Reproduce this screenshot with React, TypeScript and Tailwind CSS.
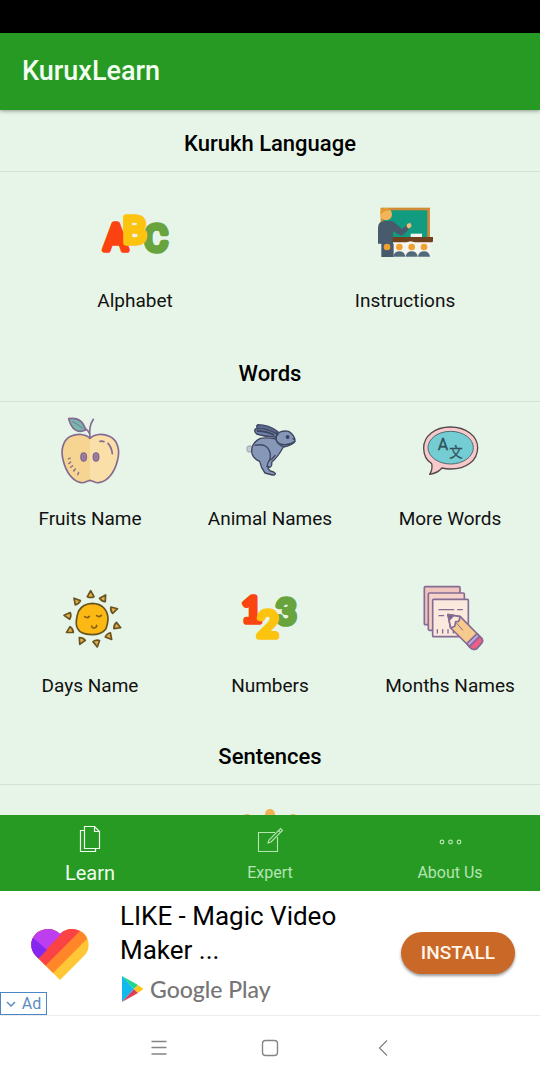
import type { ReactNode } from "react";
import { clsx } from "clsx";

function Icon({ viewBox, children }: { viewBox: string; children: ReactNode }) {
  return (
    <svg viewBox={viewBox} className="size-17 overflow-visible" aria-hidden="true">
      {children}
    </svg>
  );
}

function AbcIcon() {
  return (
    <Icon viewBox="63 27 204 204">
      <g fontFamily="Roboto, sans-serif" fontSize="112" textAnchor="middle" strokeWidth="17" strokeLinejoin="round">
        <text x="107" y="181" fontSize="108" fill="#fb4210" stroke="#fb4210">A</text>
        <text x="228" y="184" fontSize="108" fill="#69a33e" stroke="#69a33e">C</text>
        <text x="164" y="159" fill="#fcc30f" stroke="#fcc30f">B</text>
      </g>
    </Icon>
  );
}

function TeacherIcon() {
  return (
    <Icon viewBox="33 27 204 204">
      <rect x="62" y="53" width="148" height="92" fill="#cf8b35" />
      <rect x="70" y="61" width="132" height="84" fill="#119b80" />
      <rect x="152" y="131" width="34" height="10" fill="#f3f5ee" />
      <rect x="98" y="156" width="114" height="44" fill="#f5f5f0" />
      <path d="M54 156V114q0-21 20-21h17q9 0 15 7l20 17 17-14 8 10-19 20q-6 6-13 2l-20-11v37h2v40H64v-40H54z" fill="#475b6c" />
      <circle cx="78" cy="73" r="18" fill="#f4b459" />
      <path d="M62 73V56h31l-9 7q-8-2-13 3z" fill="#e39a2c" />
      <path d="M141 102l10-4 4 10-8 8-7-5z" fill="#f2bd76" />
      <path d="M98 141h121v12q0 4-4 4h-50l-13-3-13 3H98z" fill="#71401d" />
      <circle cx="81" cy="171" r="10" fill="#f0a02e" />
      {[118, 155, 192].map((x) => (
        <g key={x}>
          <circle cx={x} cy="171" r="10" fill="#f0a02e" />
          <path d={`M${x - 18} 200q2-16 18-16t18 16z`} fill="#52697a" />
        </g>
      ))}
    </Icon>
  );
}

function AppleIcon() {
  return (
    <Icon viewBox="48 33 204 204">
      <path d="M150 97C137 83 111 82 92 91C68 103 61 133 70 165C78 197 97 226 123 230C134 232 141 224 150 223z" fill="#f6d491" />
      <path d="M150 97C163 83 189 82 208 91C234 103 241 133 232 165C224 197 205 226 177 230C166 232 159 224 150 223z" fill="#fbdfa9" />
      <g fill="none" stroke="#846a91" strokeWidth="5" strokeLinecap="round" strokeLinejoin="round">
        <path d="M150 97C137 83 111 82 92 91C68 103 61 133 70 165C78 197 97 226 123 230C134 232 141 224 150 223C159 224 166 232 177 230C205 226 224 197 232 165C241 133 234 103 208 91C189 82 163 83 150 97z" />
        <path d="M150 95C147 74 150 55 160 40M149 84q-4-12-20-20" />
        <path d="M86 38q40-7 51 34Q100 88 86 38z" fill="#75b8ac" />
        <path d="M98 47q18 8 29 20" strokeWidth="3" />
        <path d="M180 106q7-2 12 1M204 112q11 12 13 31" />
        <ellipse cx="131" cy="153" rx="8" ry="12" fill="#a987a6" />
        <ellipse cx="168" cy="153" rx="8" ry="12" fill="#a987a6" />
        <path d="M131 149v8M168 149v8" strokeWidth="4" />
        <path d="M85 159l6-3M86 173l6-5M92 184l6-5M101 195l5-6M113 206l3-7" strokeWidth="4" />
      </g>
    </Icon>
  );
}

function RabbitIcon() {
  return (
    <Icon viewBox="18 33 204 204">
      <g stroke="#3e4762" strokeWidth="4" strokeLinejoin="round" strokeLinecap="round">
        <ellipse cx="59" cy="129" rx="8" ry="9" fill="#c6ccd2" stroke="#a9b0bd" />
        <path d="M144 77Q116 56 83 56Q75 64 87 70L137 85z" fill="#59698f" />
        <path d="M139 99Q110 94 91 97Q65 109 65 135Q66 157 89 166Q93 186 105 201L127 207Q137 207 136 202Q132 197 121 195Q112 187 112 181L120 184Q127 181 125 169Q145 151 160 123Q187 118 195 106Q196 89 176 76Q153 72 139 86z" fill="#8697b7" />
        <path d="M144 85Q104 63 76 69Q71 76 80 84Q110 94 137 93z" fill="#7182aa" />
        <path d="M83 75Q110 75 130 86" fill="none" strokeWidth="6" />
        <path d="M75 118Q102 112 114 127Q125 143 119 162Q112 169 111 181M138 101Q143 117 160 122M117 164q11-4 18-16" fill="none" />
        <path d="M140 86Q133 103 148 113Q170 122 194 107" fill="none" />
        <circle cx="173" cy="93" r="4" fill="#30384d" />
        <path d="M189 98l5 3" fill="none" />
      </g>
    </Icon>
  );
}

function TranslateIcon() {
  return (
    <Icon viewBox="18 18 204 204">
      <path d="M121 48C168 48 203 75 203 110C203 149 168 174 122 174C111 174 103 173 96 171Q82 187 59 190Q69 174 65 158C49 148 41 130 41 111C41 75 75 48 121 48z" fill="#f8c9cb" stroke="#52474b" strokeWidth="4" strokeLinejoin="round" />
      <ellipse cx="122" cy="110" rx="68" ry="49" fill="#73cdd3" stroke="#506b73" strokeWidth="3" />
      <g fill="#31535d" stroke="#31535d" textAnchor="middle" fontFamily="Roboto, 'Noto Sans CJK SC', sans-serif">
        <text x="99" y="118" fontSize="48" strokeWidth="1">A</text>
        <text x="138" y="137" fontSize="40" strokeWidth="1">文</text>
      </g>
    </Icon>
  );
}

const rays = [
  [122, 55, 0],
  [161, 66, 32],
  [192, 101, 75],
  [202, 151, 112],
  [178, 182, 140],
  [140, 202, 170],
  [94, 195, 205],
  [59, 164, 240],
  [53, 119, 275],
  [79, 75, 320],
];

function SunIcon() {
  return (
    <Icon viewBox="18 24 204 204">
      <g stroke="#665321" strokeWidth="5" strokeLinecap="round" strokeLinejoin="round">
        {rays.map(([x, y, angle]) => (
          <path
            key={angle}
            d="M0-11L10 7Q0 12-10 7z"
            transform={`translate(${x} ${y}) rotate(${angle})`}
            fill="#e4ae45"
          />
        ))}
        <path d="M127 82C157 83 174 102 174 130Q173 145 168 158Q155 176 125 176Q91 175 83 158C75 145 80 119 86 105Q98 83 127 82z" fill="#fdb913" />
        <path d="M104 122q8 6 14-1M140 119q7 6 14-1M125 150q1 7 8 6 7-1 7-8" fill="none" stroke="#8b5f10" />
      </g>
    </Icon>
  );
}

function NumbersIcon() {
  return (
    <Icon viewBox="18 9 204 204">
      <g fontFamily="Lato, sans-serif" fontSize="106" textAnchor="middle" strokeWidth="17" strokeLinejoin="round">
        <text x="66" y="124" fill="#fb4510" stroke="#fb4510">1</text>
        <text x="168" y="130" fill="#69a33e" stroke="#69a33e">3</text>
        <text x="114" y="168" fontSize="110" fill="#fcc30f" stroke="#fcc30f">2</text>
      </g>
    </Icon>
  );
}

function NotesIcon() {
  return (
    <Icon viewBox="18 24 204 204">
      <g stroke="#866c94" strokeWidth="5" strokeLinejoin="round" strokeLinecap="round">
        <rect x="43" y="32" width="107" height="114" rx="3" fill="#efc4bd" />
        <rect x="55" y="51" width="108" height="112" rx="3" fill="#f5d3c8" />
        <rect x="68" y="70" width="107" height="112" rx="3" fill="#fce9dd" />
        <path d="M87 101h44M143 101h14M87 119h14M82 161v10M98 161v10M114 161v10M130 161v10" fill="none" strokeWidth="4" />
        <path d="M114 116L151 122L214 186Q220 193 215 201L202 216Q192 224 183 216L122 156z" fill="#f6ca8d" />
        <path d="M114 116L151 122L146 136L137 137L134 151L122 156z" fill="#fbeadb" />
        <path d="M114 116l16 3-11 12z" fill="#715783" />
        <path d="M140 142l18 20" strokeWidth="3" />
        <path d="M170 203L201 173L209 181L178 212z" fill="#bfa6e3" />
        <path d="M178 212L209 181L216 188Q220 195 215 201L202 216Q192 224 183 217z" fill="#ed5d86" />
      </g>
    </Icon>
  );
}

function PeopleIcon() {
  return (
    <Icon viewBox="0 0 68 68">
      <g fill="#efb354">
        <circle cx="34" cy="14" r="5" />
        <circle cx="11" cy="18" r="4" />
        <circle cx="57" cy="18" r="4" />
        <path d="M24 44V30q0-8 10-8t10 8v14zM3 44V31q0-6 8-6t8 6v13zM49 44V31q0-6 8-6t8 6v13z" />
      </g>
    </Icon>
  );
}

type Item = { label: string; icon: ReactNode };

const language: Item[] = [
  { label: "Alphabet", icon: <AbcIcon /> },
  { label: "Instructions", icon: <TeacherIcon /> },
];

const words: Item[] = [
  { label: "Fruits Name", icon: <AppleIcon /> },
  { label: "Animal Names", icon: <RabbitIcon /> },
  { label: "More Words", icon: <TranslateIcon /> },
  { label: "Days Name", icon: <SunIcon /> },
  { label: "Numbers", icon: <NumbersIcon /> },
  { label: "Months Names", icon: <NotesIcon /> },
];

function Heading({ children }: { children: ReactNode }) {
  return (
    <h2 className="border-b border-[#d3e1d4] pt-[18px] pb-[11px] text-center text-[22px] leading-8 font-medium text-black">
      {children}
    </h2>
  );
}

function Tile({ label, icon }: Item) {
  return (
    <button type="button" className="flex flex-col items-center gap-[22px] text-[19px] leading-6 whitespace-nowrap text-[#111]">
      {icon}
      {label}
    </button>
  );
}

function LearnIcon() {
  return (
    <svg viewBox="0 0 28 28" className="size-7" fill="none" stroke="currentColor" aria-hidden="true">
      <path d="M8.500 1.500h10l5 5v17h-15zM18.500 1.500v5h5M8.500 5.500h-4v21h15v-3" strokeWidth="1.200" />
    </svg>
  );
}

function ExpertIcon() {
  return (
    <svg viewBox="0 0 28 28" className="size-7" fill="none" stroke="currentColor" aria-hidden="true">
      <path d="M19 7.500H2.500v19h19V12M12 18l1-3L24.500 3.500l2 2L15 17zM22.500 5.500l2 2" strokeWidth="1.100" />
    </svg>
  );
}

function DotsIcon() {
  return (
    <svg viewBox="0 0 28 28" className="size-7" fill="none" stroke="currentColor" strokeWidth="1.200" aria-hidden="true">
      <circle cx="6" cy="17" r="1.800" />
      <circle cx="14.500" cy="17" r="1.800" />
      <circle cx="23" cy="17" r="1.800" />
    </svg>
  );
}

const tabs = [
  { label: "Learn", icon: <LearnIcon />, active: true },
  { label: "Expert", icon: <ExpertIcon />, active: false },
  { label: "About Us", icon: <DotsIcon />, active: false },
];

function AdBanner() {
  return (
    <aside className="relative flex h-[125px] shrink-0 items-start border-b border-[#ececec] bg-white pr-[25px] pl-[30px]">
      <svg viewBox="0 0 60 54" className="mt-[37px] h-[54px] w-[60px] shrink-0" aria-hidden="true">
        <defs>
          <clipPath id="heart">
            <path d="M30 52L6 28C-2 20 1 7 10 3Q21-2 30 6Q39-2 50 3C59 7 62 20 54 28z" />
          </clipPath>
        </defs>
        <g clipPath="url(#heart)">
          <path d="M0 0h60v54H0z" fill="#ffc736" />
          <path d="M0 0h60v8L18 50H0z" fill="#ff8629" />
          <path d="M0 0h53L10 43H0z" fill="#fb4245" />
          <path d="M0 0h37L8 30H0z" fill="#bd3df0" />
          <path d="M0 7l17 15L8 31H0z" fill="#8528ef" />
        </g>
      </svg>
      <div className="ml-[30px] min-w-0 flex-1 pt-2">
        <p className="max-w-[240px] text-[26px] leading-[34px] text-black">LIKE - Magic Video Maker ...</p>
        <p className="mt-1.5 flex items-center gap-1.5 font-['Lato',sans-serif] text-[23px] leading-8 font-medium text-[#757575]">
          <svg viewBox="0 0 24 28" className="h-7 w-6" aria-hidden="true">
            <path d="M2 1L14 14 2 27z" fill="#11b9ee" />
            <path d="M2 1L18 10 14 14z" fill="#20d58b" />
            <path d="M2 27L18 18 14 14z" fill="#df3d57" />
            <path d="M18 10l5.500 4L18 18l-4-4z" fill="#fdc51a" />
          </svg>
          Google Play
        </p>
      </div>
      <button
        type="button"
        className="mt-[41px] h-[42px] rounded-full bg-[#ca6828] px-5 text-[19px] font-medium text-[#fff4e8] shadow-[0_2px_3px_rgba(0,0,0,0.4)]"
      >
        INSTALL
      </button>
      <a
        href="#ad"
        className="absolute bottom-0 left-0 flex h-[23px] w-[47px] items-center justify-center gap-1.5 border border-[#4d86c6] bg-white text-[16px] text-[#5b8dc0]"
      >
        <svg viewBox="0 0 10 6" className="h-1.5 w-2.5" fill="none" stroke="currentColor" strokeWidth="1.500" aria-hidden="true">
          <path d="M1 1l4 4 4-4" />
        </svg>
        Ad
      </a>
    </aside>
  );
}

function SystemBar() {
  return (
    <div className="flex h-16 shrink-0 items-center justify-center gap-[89px] bg-white text-[#858585]">
      <button type="button" aria-label="Recent apps">
        <svg viewBox="0 0 22 22" className="size-[22px]" stroke="currentColor" strokeWidth="1.300">
          <path d="M3.500 4.500h15M3.500 10.500h15M3.500 17h15" />
        </svg>
      </button>
      <button type="button" aria-label="Home">
        <svg viewBox="0 0 22 22" className="size-[22px]" fill="none" stroke="currentColor" strokeWidth="1.400">
          <rect x="3.500" y="3.500" width="15" height="15" rx="3" />
        </svg>
      </button>
      <button type="button" aria-label="Back">
        <svg viewBox="0 0 22 22" className="size-[22px]" fill="none" stroke="currentColor" strokeWidth="1.300">
          <path d="M17 3.500L9.500 11l7.500 7.500" />
        </svg>
      </button>
    </div>
  );
}

export default function App() {
  return (
    <div className="flex h-screen flex-col bg-[#e7f5e8] font-['Roboto',sans-serif]">
      <div className="h-[33px] shrink-0 bg-black" />
      <header className="z-10 flex h-[77px] shrink-0 items-center bg-[#279a24] px-[22px] shadow-[0_1px_4px_rgba(0,0,0,0.4)]">
        <h1 className="text-[27px] font-medium text-[#f4fff2]">KuruxLearn</h1>
      </header>

      <main className="min-h-0 flex-1 overflow-y-auto [scrollbar-width:none]">
        <section>
          <Heading>Kurukh Language</Heading>
          <div className="grid grid-cols-2 py-[27px]">
            {language.map((item) => (
              <Tile key={item.label} {...item} />
            ))}
          </div>
        </section>
        <section>
          <Heading>Words</Heading>
          <div className="grid grid-cols-3 gap-y-[53px] pt-[15px] pb-[25px]">
            {words.map((item) => (
              <Tile key={item.label} {...item} />
            ))}
          </div>
        </section>
        <section>
          <Heading>Sentences</Heading>
          <div className="flex justify-center pt-[15px] pb-[25px]">
            <PeopleIcon />
          </div>
        </section>
      </main>

      <nav className="grid h-[76px] shrink-0 grid-cols-3 bg-[#279a24]">
        {tabs.map((tab) => (
          <button
            key={tab.label}
            type="button"
            className={clsx(
              "flex flex-col items-center gap-1 pt-2.5 leading-8",
              tab.active ? "text-[20px] text-[#f1fff0]" : "text-[16px] text-[#b5e5b2]"
            )}
          >
            {tab.icon}
            {tab.label}
          </button>
        ))}
      </nav>
      <AdBanner />
      <SystemBar />
    </div>
  );
}
